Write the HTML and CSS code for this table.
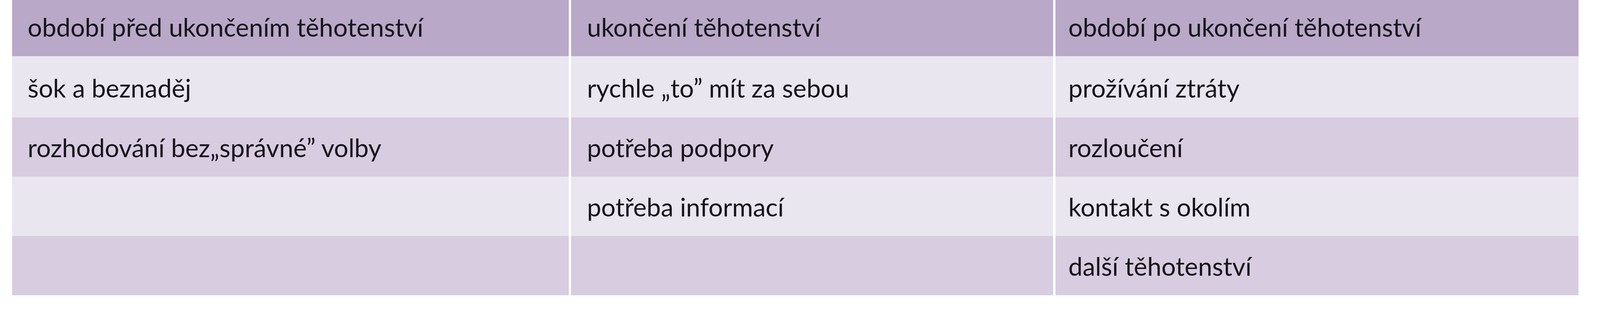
FILE: index.html
```html
<!DOCTYPE html>
<html lang="cs">
<head>
<meta charset="utf-8">
<title>Období těhotenství</title>
<link rel="stylesheet" href="styles.css">
</head>
<body>
<div class="table">
  <div class="cell head c1">období před ukončením těhotenství</div>
  <div class="cell head c2">ukončení těhotenství</div>
  <div class="cell head c3">období po ukončení těhotenství</div>

  <div class="cell light first c1">šok a beznaděj</div>
  <div class="cell light first c2">rychle „to” mít za sebou</div>
  <div class="cell light first c3">prožívání ztráty</div>

  <div class="cell dark c1">rozhodování bez„správné” volby</div>
  <div class="cell dark c2">potřeba podpory</div>
  <div class="cell dark c3">rozloučení</div>

  <div class="cell light c1"></div>
  <div class="cell light c2">potřeba informací</div>
  <div class="cell light c3">kontakt s okolím</div>

  <div class="cell dark c1"></div>
  <div class="cell dark c2"></div>
  <div class="cell dark c3">další těhotenství</div>
</div>
</body>
</html>
```

FILE: styles.css
```css
html, body {
  margin: 0;
  padding: 0;
  background: #ffffff;
}

body {
  font-family: Lato, "Open Sans", "Liberation Sans", sans-serif;
  font-size: 65px;
  color: #18141c;
}

.table {
  display: grid;
  grid-template-columns: 1672fr 1448fr 1571fr;
  grid-template-rows: 144px 157px 152px 152px 152px;
  column-gap: 0.15vw;
  margin-left: 0.75vw;
  width: 97.9vw;
}

.cell {
  line-height: 78px;
  white-space: nowrap;
  box-sizing: border-box;
  padding-top: 38px;
  min-width: 0;
}

.c1 { padding-left: 0.98vw; }
.c2 { padding-left: 1vw; }
.c3 { padding-left: 0.81vw; }

.head {
  background: #b9a8c8;
  padding-top: 30px;
}

.light {
  background: #eae6ef;
}

.dark {
  background: #d8cce0;
}

.first {
  padding-top: 42px;
}
```
